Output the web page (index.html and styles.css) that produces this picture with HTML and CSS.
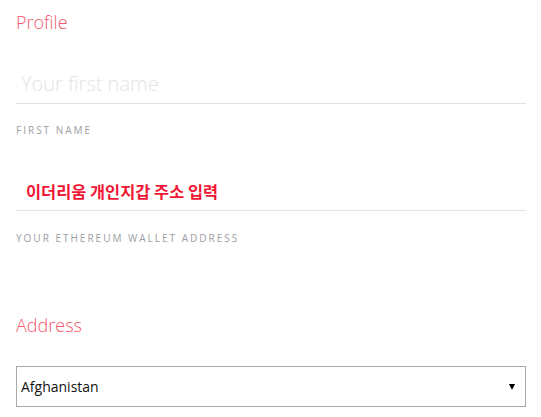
FILE: index.html
```html
<!DOCTYPE html>
<html>
<head>
<meta charset="utf-8">
<link rel="stylesheet" href="styles.css">
</head>
<body>
<div class="page">
  <h2 class="section-title">Profile</h2>
  <div class="field">
    <input class="text-input" type="text" placeholder="Your first name">
    <label class="field-label">First Name</label>
  </div>
  <div class="field field-wallet">
    <input class="text-input wallet" type="text" placeholder="이더리움 개인지갑 주소 입력">
    <label class="field-label wallet-label">Your Ethereum Wallet Address</label>
  </div>
  <h2 class="section-title address-title">Address</h2>
  <div class="select-wrap">
    <select class="country">
      <option>Afghanistan</option>
    </select>
    <span class="arrow"></span>
  </div>
</div>
</body>
</html>
```

FILE: styles.css
```css
* { box-sizing: border-box; }
html, body { margin: 0; padding: 0; background: #fff; }
body { font-family: "Open Sans", "Noto Sans CJK KR", sans-serif; }
.page { padding: 8px 15px 0 16px; display: flex; flex-direction: column; }
.section-title {
  margin: 0;
  font-weight: 300;
  font-size: 18px;
  line-height: 28px;
  color: #f5576c;
}
.field { display: flex; flex-direction: column; }
.text-input {
  border: none;
  border-bottom: 1px solid #e2e2e2;
  outline: none;
  height: 40px;
  padding: 0 5px;
  font-family: "Open Sans", sans-serif;
  font-weight: 300;
  font-size: 20px;
  color: #333;
  margin-top: 28px;
}
.text-input::placeholder { color: #e4e4e4; }
.wallet { font-family: "Noto Sans CJK KR", sans-serif; margin-top: 32px; height: 42px; padding-left: 10px; }
.wallet::placeholder { color: #f01634; font-weight: 700; font-size: 16.4px; }
.field-label {
  margin-top: 19px;
  font-size: 10px;
  line-height: 14px;
  letter-spacing: 2px;
  text-transform: uppercase;
  color: #9b9ea4;
}
.wallet-label { margin-top: 20px; }
.address-title { margin-top: 66px; }
.select-wrap { position: relative; margin-top: 27px; }
.country {
  width: 510px;
  height: 41px;
  border: 1px solid #a9a9a9;
  border-radius: 0;
  background: #fff;
  padding: 0 4px;
  font-family: "Open Sans", sans-serif;
  font-size: 14px;
  color: #111;
  appearance: none;
  -webkit-appearance: none;
  outline: none;
}
.arrow {
  position: absolute;
  right: 11px;
  top: 18px;
  width: 0;
  height: 0;
  border-left: 3px solid transparent;
  border-right: 3px solid transparent;
  border-top: 6px solid #000;
  pointer-events: none;
}
```
